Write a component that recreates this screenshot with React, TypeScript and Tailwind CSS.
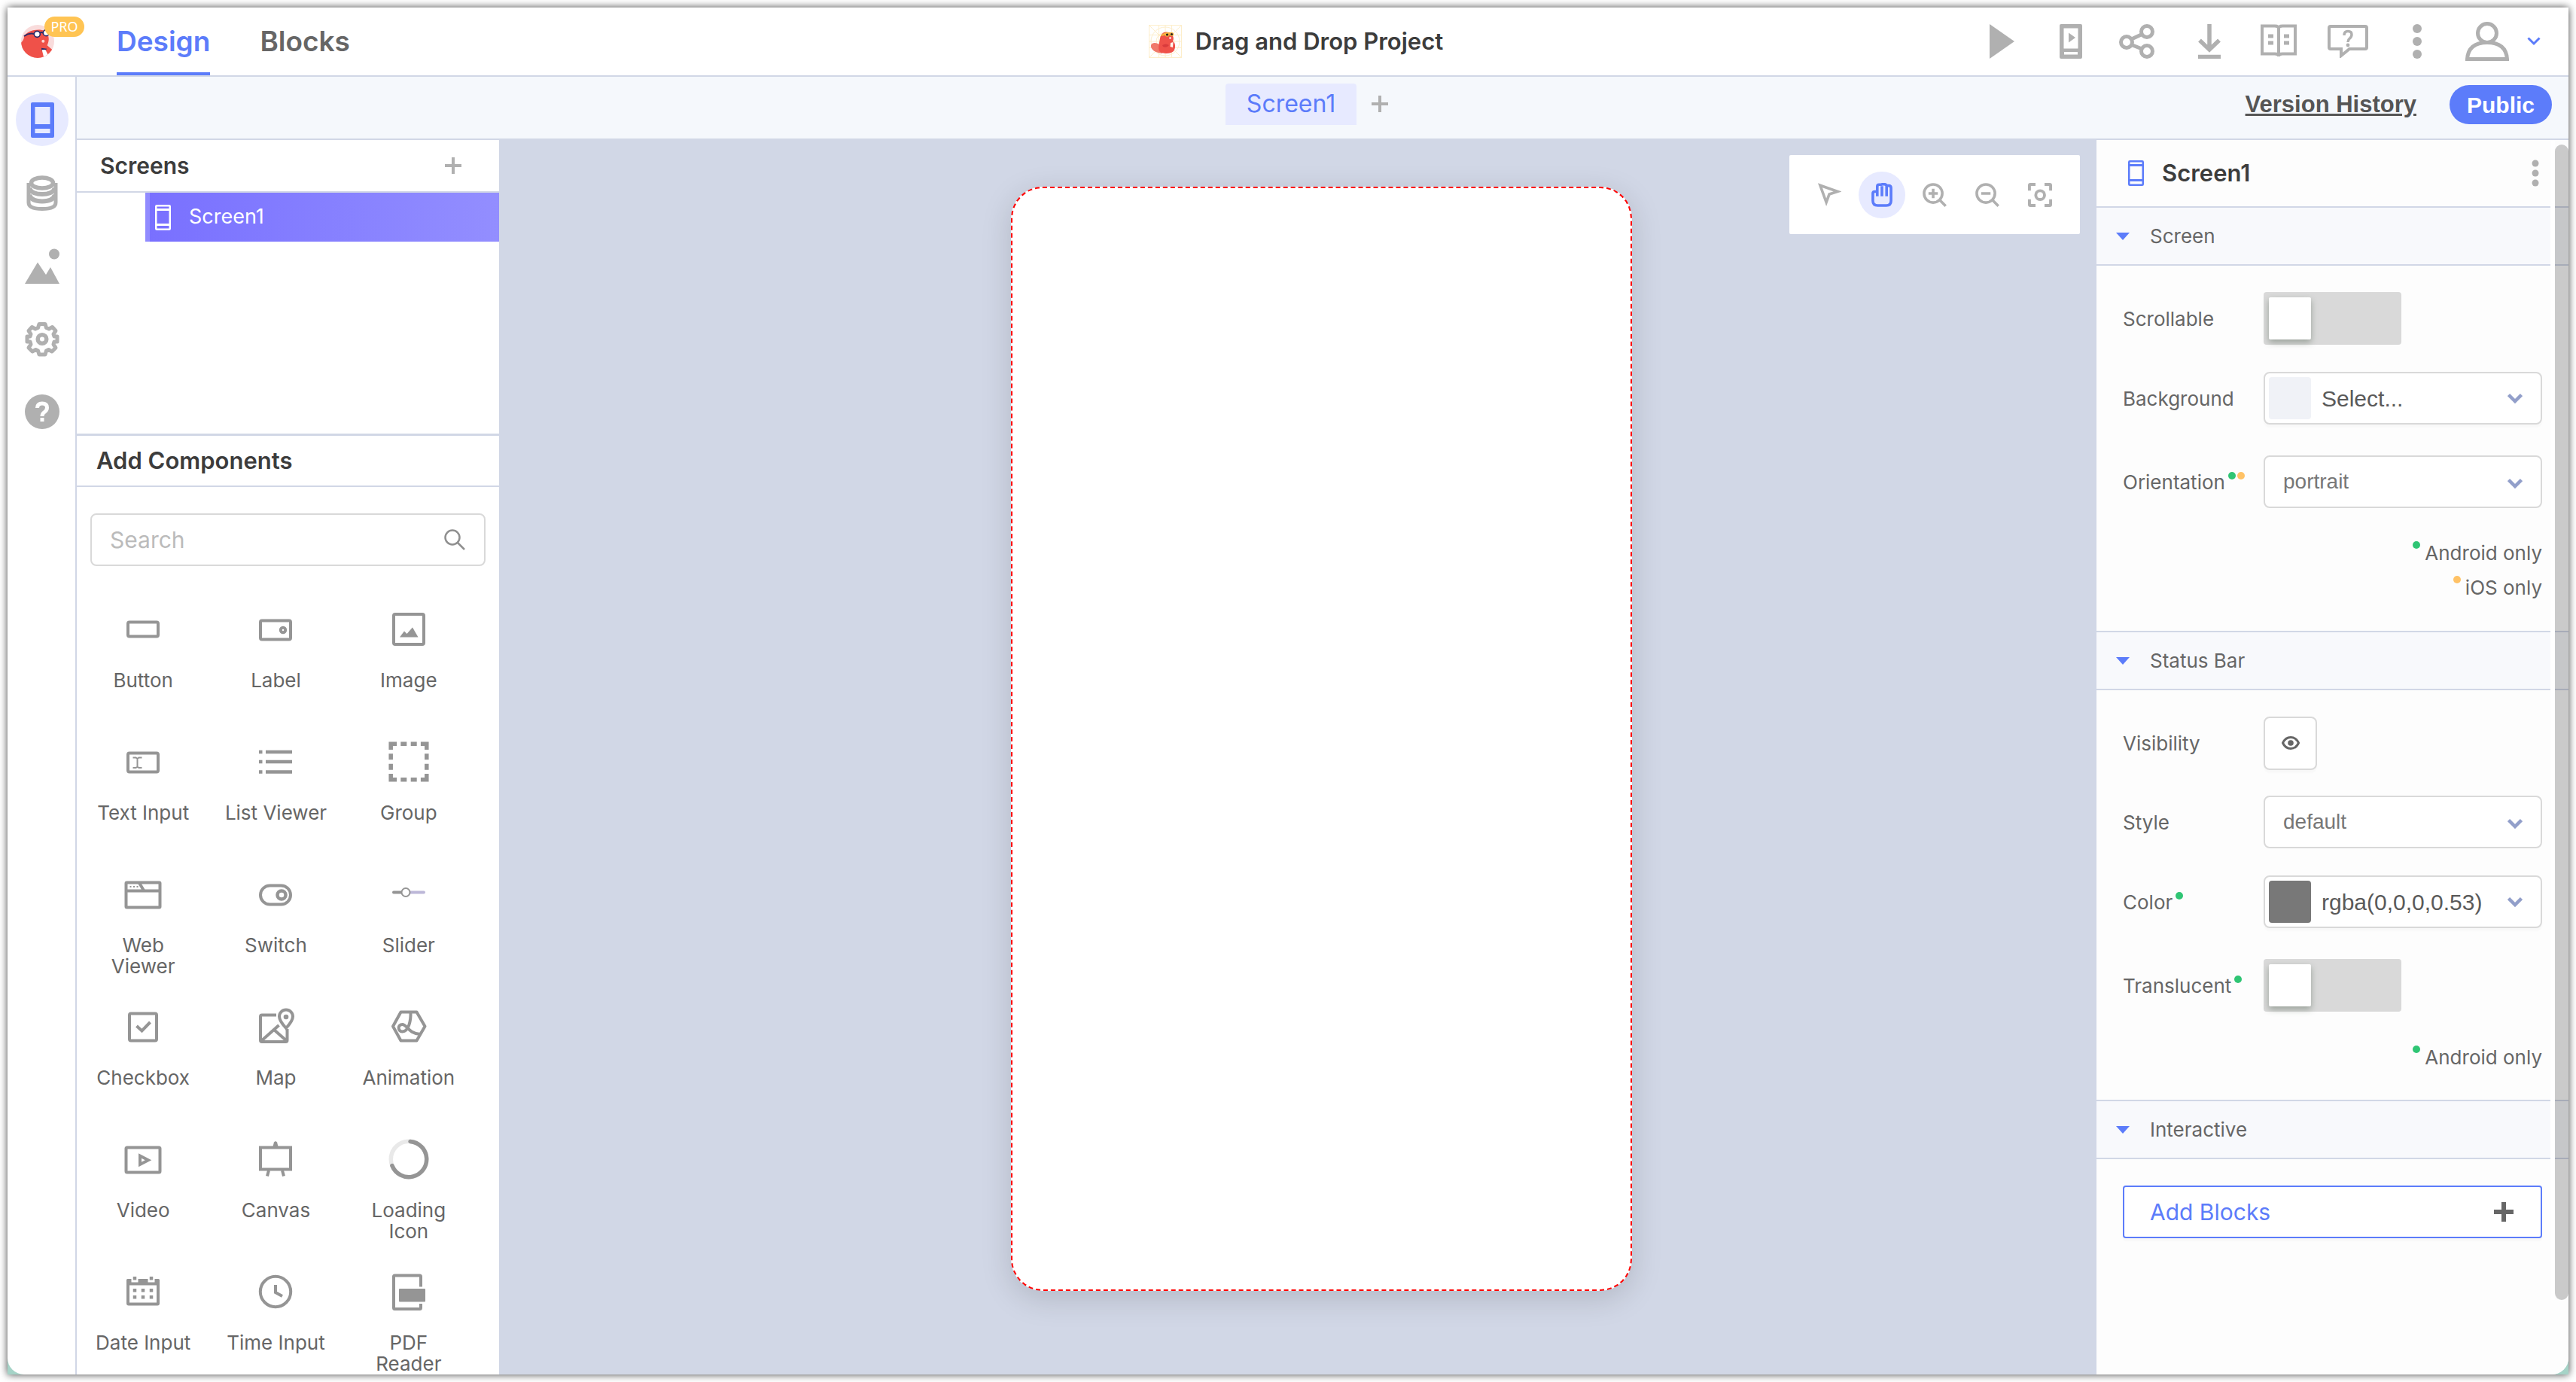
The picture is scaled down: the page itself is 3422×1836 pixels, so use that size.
import React from "react";

type IconProps = { className?: string };

/* ---------- Brand drawings ---------- */

function AvatarLogo() {
  return (
    <svg viewBox="24 39 132 132" className="size-11" aria-hidden="true">
      <clipPath id="avatarClip">
        <circle cx="90" cy="105" r="66" />
      </clipPath>
      <circle cx="90" cy="105" r="66" fill="#f9dcdc" />
      <g clipPath="url(#avatarClip)">
        <path d="M35 84C48 66 74 56 104 59C126 62 136 82 134 100C133 110 130 116 128 121L148 138V175H24V110C30 104 38 94 35 84Z" fill="#ef5149" />
        <path d="M105 131L127 134L121 141H106Z" fill="#2b2a66" />
        <path d="M107 139L121 138L132 160L115 170Z" fill="#fff" />
        <path d="M36 84Q56 70 76 75M98 71Q106 67 112 71" fill="none" stroke="#2b2a66" strokeWidth="6" />
        <circle cx="88" cy="76" r="12" fill="#fff" stroke="#2b2a66" strokeWidth="5" />
        <circle cx="124" cy="71" r="12" fill="#fff" stroke="#2b2a66" strokeWidth="5" />
        <circle cx="112" cy="104" r="6" fill="#fbd5d2" />
      </g>
    </svg>
  );
}

function ProjectLogo() {
  return (
    <svg viewBox="0 0 44 44" className="size-11" aria-hidden="true">
      <g fill="none" stroke="#fdeecb" strokeWidth="1">
        <rect x="0.5" y="0.5" width="43" height="43" />
        <path d="M0 13.5H44M0 30.5H44M13.5 0V44M30.5 0V44M22 0V44M0 22H44M0 0L44 44M44 0L0 44" />
        <circle cx="22" cy="22" r="19" />
        <circle cx="22" cy="22" r="12" />
      </g>
      <path d="M15 27C11 23 4 23 3 27C2 33 9 37 18 38L20 30Z" fill="#f0796a" />
      <path d="M15 18C16 11 21 8 27 10C32 12 34 17 32 22C36 24 36 31 33 35C29 39 18 39 14 35C12 31 14 24 15 18Z" fill="#ef5149" />
      <path d="M18 27Q23 24 27 27Q24 31 19 29Z" fill="#d93b3c" />
      <path d="M16 14Q22 8 33 11V14Q24 13 16 15Z" fill="#f3b23d" />
      <circle cx="24.5" cy="13" r="2.8" fill="#f3b23d" />
      <circle cx="30.5" cy="12.5" r="2.6" fill="#f3b23d" />
      <circle cx="24.5" cy="13" r="1.6" fill="#222" />
      <circle cx="30.5" cy="12.5" r="1.5" fill="#222" />
      <circle cx="28.5" cy="17.5" r="1.3" fill="#fff" />
      <path d="M29 24L32.5 23L32 30L28.5 29Z" fill="#fff5ec" />
    </svg>
  );
}

/* ---------- Shared icons ---------- */

function Plus({ className }: IconProps) {
  return (
    <svg viewBox="0 0 22 22" className={className} fill="none" stroke="currentColor" strokeWidth="4" aria-hidden="true">
      <path d="M11 0V22M0 11H22" />
    </svg>
  );
}

function ScreenIcon({ className }: IconProps) {
  return (
    <svg viewBox="0 0 21 34" className={className} fill="none" stroke="currentColor" aria-hidden="true">
      <rect x="1.25" y="1.25" width="18.5" height="31.5" rx="1" strokeWidth="2.5" />
      <path d="M1 6.5H20M1 26.5H20" strokeWidth="3" />
    </svg>
  );
}

function Chevron({ className }: IconProps) {
  return (
    <svg viewBox="0 0 20 14" className={className} fill="none" stroke="currentColor" strokeWidth="4.5" aria-hidden="true">
      <path d="M1.500 2.500L10 11L18.500 2.500" />
    </svg>
  );
}

/* ---------- Header icons ---------- */

const headerIcons: { label: string; icon: React.ReactNode }[] = [
  {
    label: "Play",
    icon: <svg viewBox="0 0 33 46" className="h-[46px] w-[33px]" fill="currentColor"><path d="M0 0L33 23L0 46Z" /></svg>,
  },
  {
    label: "Live test",
    icon: (
      <svg viewBox="0 0 30 46" className="h-[46px] w-[30px]" fill="currentColor">
        <path fillRule="evenodd" d="M2 0H28Q30 0 30 2V44Q30 46 28 46H2Q0 46 0 44V2Q0 0 2 0ZM5.500 5.500V32.500H24.500V5.500ZM6 37V40.500H24V37Z" />
        <path d="M12 11.500L21 18L12 24.500Z" />
      </svg>
    ),
  },
  {
    label: "Share",
    icon: (
      <svg viewBox="4 0 56 46" className="h-[46px] w-14" fill="none" stroke="currentColor" strokeWidth="5">
        <circle cx="14" cy="24" r="7.500" />
        <circle cx="41" cy="10" r="7.500" />
        <circle cx="41" cy="36" r="7.500" />
        <path d="M20.500 20L34.500 13.500M20.500 27.500L34.500 33" />
      </svg>
    ),
  },
  {
    label: "Download",
    icon: (
      <svg viewBox="0 0 30 46" className="h-[46px] w-[30px]" fill="none" stroke="currentColor" strokeWidth="6">
        <path d="M15 0V32M2 21.500L15 34L28 21.500M0 43.500H30" strokeWidth="5.500" />
      </svg>
    ),
  },
  {
    label: "Documentation",
    icon: (
      <svg viewBox="0 0 48 46" className="h-[46px] w-[48px]" fill="none" stroke="currentColor" strokeWidth="4">
        <path d="M2 2.500H19Q24 2.500 24 6Q24 2.500 29 2.500H46V39.500H29Q24 39.500 24 43Q24 39.500 19 39.500H2ZM24 5V43" />
        <path d="M10 16H17M10 25H17M31 16H38M31 25H38" strokeWidth="5" />
      </svg>
    ),
  },
  {
    label: "Community help",
    icon: (
      <svg viewBox="0 0 54 44" className="h-11 w-[54px]" fill="none" stroke="currentColor" strokeWidth="4">
        <path d="M4 2H50Q52 2 52 4V30Q52 32 50 32H29L18 41V32H4Q2 32 2 30V4Q2 2 4 2Z" />
        <path d="M22 14Q22 8.500 27 8.500Q32 8.500 32 13Q32 16 29 18.500Q27 20 27 23" strokeWidth="3.500" />
        <circle cx="27" cy="27" r="2.400" fill="currentColor" stroke="none" />
      </svg>
    ),
  },
  {
    label: "More",
    icon: (
      <svg viewBox="0 0 12 46" className="h-[46px] w-3" fill="currentColor">
        <circle cx="6" cy="6" r="6" /><circle cx="6" cy="23" r="6" /><circle cx="6" cy="40" r="6" />
      </svg>
    ),
  },
];

/* ---------- Left rail icons ---------- */

const railIcons: { label: string; active?: boolean; icon: React.ReactNode }[] = [
  {
    label: "Screens",
    active: true,
    icon: (
      <svg viewBox="0 0 31 47" className="h-[47px] w-[31px]" fill="currentColor">
        <path fillRule="evenodd" d="M2 0H29Q31 0 31 2V45Q31 47 29 47H2Q0 47 0 45V2Q0 0 2 0ZM5.500 6V29H25.500V6ZM5.500 35V41H25.500V35Z" />
      </svg>
    ),
  },
  {
    label: "Data",
    icon: (
      <svg viewBox="0 0 42 47" className="h-[47px] w-[42px]" fill="none" stroke="currentColor" strokeWidth="5">
        <ellipse cx="21" cy="10" rx="14.500" ry="7" strokeWidth="5.500" />
        <path d="M3 10V36Q3 44.500 21 44.500Q39 44.500 39 36V10" />
        <path d="M4 17Q7 25 21 25Q35 25 38 17M4 26Q7 34.500 21 34.500Q35 34.500 38 26" strokeWidth="6" />
      </svg>
    ),
  },
  {
    label: "Assets",
    icon: (
      <svg viewBox="0 0 46 47" className="h-[47px] w-[46px]" fill="currentColor">
        <path d="M0 47L17 18.500L28 35L34 25L46 47Z" />
        <circle cx="39" cy="7.500" r="7" />
      </svg>
    ),
  },
  {
    label: "Settings",
    icon: (
      <svg viewBox="0 0 46 47" className="h-[47px] w-[46px]" fill="none" stroke="currentColor" strokeWidth="5" strokeLinejoin="round">
        <path d="M19 3.500H27L28.500 8.500L32 10L36.500 7.500L41 12.500L38 17L39 20H43V27H39L38 30.500L41 35L36 40L31.500 37.500L28.500 39L27 44H19L17.500 39L14.500 37.500L10 40L5 35L8 30.500L7 27H3V20H7L8 17L5 12.500L9.500 7.500L14 10L17.500 8.500Z" />
        <circle cx="23" cy="23.500" r="5.800" strokeWidth="5.500" />
      </svg>
    ),
  },
  {
    label: "Help",
    icon: (
      <svg viewBox="0 0 46 46" className="size-[46px]" aria-hidden="true">
        <circle cx="23" cy="23" r="23" fill="currentColor" />
        <path d="M16.500 18Q16.500 12 23 12Q29.500 12 29.500 17.500Q29.500 21 26 23.500Q23 25.500 23 29" fill="none" stroke="#fff" strokeWidth="5" />
        <rect x="20.500" y="31" width="5" height="5" fill="#fff" />
      </svg>
    ),
  },
];

/* ---------- Component palette ---------- */

const palette: { label: string; icon: React.ReactNode }[] = [
  { label: "Button", icon: <rect x="8" y="18.500" width="40" height="19" rx="2" /> },
  {
    label: "Label",
    icon: <><rect x="8" y="16.500" width="40" height="25" rx="2" /><circle cx="38" cy="29" r="3.200" /></>,
  },
  {
    label: "Image",
    icon: (
      <>
        <rect x="8" y="8" width="40" height="40" rx="2" />
        <path d="M16 38.500L22 30.500L25.500 34L33 25.500L40.500 38.500Z" fill="currentColor" stroke="none" />
      </>
    ),
  },
  {
    label: "Text Input",
    icon: (
      <>
        <rect x="8" y="16.500" width="40" height="25" rx="2" />
        <path d="M14.500 22.500H18.500L20.500 24L22.500 22.500H26.500M14.500 36H18.500L20.500 34.500L22.500 36H26.500M20.500 23V35" strokeWidth="2" />
      </>
    ),
  },
  {
    label: "List Viewer",
    icon: <path d="M6 15H10.500M6 28H10.500M6 41.500H10.500M15 15H50M15 28H50M15 41.500H50" strokeWidth="4.500" />,
  },
  {
    label: "Group",
    icon: (
      <path
        d="M1.500 4.300H54.500M1.500 51.700H54.500M4.200 1.500V54.500M51.800 1.500V54.500"
        strokeWidth="5.500"
        strokeDasharray="10.6 5.200 8 5.400 8 5.200 10.600 0"
      />
    ),
  },
  {
    label: "Web\nViewer",
    icon: (
      <>
        <rect x="5.500" y="12.500" width="45" height="33" rx="1" />
        <path d="M5 23.500H50M23 13L29 23" />
        <path d="M10.500 18H12.500M15 18H17M19.500 18H21.500" strokeWidth="2" />
      </>
    ),
  },
  {
    label: "Switch",
    icon: <><rect x="8" y="16.500" width="40" height="25" rx="12.500" /><circle cx="36" cy="29" r="5.500" strokeWidth="4.500" /></>,
  },
  {
    label: "Slider",
    icon: (
      <>
        <path d="M8 25.500H20" strokeLinecap="round" />
        <path d="M30 25.500H48" stroke="#bdb8d8" strokeLinecap="round" />
        <circle cx="24" cy="25.500" r="5.500" fill="#fff" strokeWidth="2" />
      </>
    ),
  },
  {
    label: "Checkbox",
    icon: <><rect x="10" y="10.500" width="36" height="36" rx="2" /><path d="M19.500 27L26.500 33.500L37.500 22" /></>,
  },
  {
    label: "Map",
    icon: (
      <>
        <path d="M29 12.500H10Q8 12.500 8 14.500V46Q8 48 10 48H41.500Q43.500 48 43.500 46V31M9 47L32.500 26M26 32L43 47" />
        <path d="M42 30Q33 20 33 14.500A9 9 0 0 1 51 14.500Q51 20 42 30Z" strokeWidth="4" />
        <circle cx="42" cy="15" r="3.300" fill="currentColor" stroke="none" />
      </>
    ),
  },
  {
    label: "Animation",
    icon: (
      <>
        <path d="M7 27.500L17.500 8.500H38.500L49.500 27.500L38.500 46.500H17.500Z" strokeLinejoin="round" />
        <path d="M30.500 8C31 20 28 34 19.500 34.500C13 34 13 25 19.500 25C26 25 27 37 43.500 38" />
      </>
    ),
  },
  {
    label: "Video",
    icon: <><rect x="5.500" y="12.500" width="45" height="33" rx="1.500" /><path d="M24 23.500V35L35 29.200Z" /></>,
  },
  {
    label: "Canvas",
    icon: (
      <>
        <rect x="8" y="12.500" width="40" height="29" />
        <path d="M24.500 11L26 5.500Q28 3 30 5.500L31.500 11Z" fill="currentColor" stroke="none" />
        <path d="M19 43L17 50.500M37 43L39 50.500" />
      </>
    ),
  },
  {
    label: "Loading\nIcon",
    icon: (
      <>
        <circle cx="28" cy="28" r="23.700" stroke="#e9e9e9" strokeWidth="5.500" />
        <path d="M30 4.400A23.700 23.700 0 1 1 5.900 36.600" strokeWidth="5.500" strokeLinecap="round" />
      </>
    ),
  },
  {
    label: "Date Input",
    icon: (
      <>
        <path d="M8 14V43.500Q8 44.500 9 44.500H47Q48 44.500 48 43.500V14" />
        <path d="M6 12.500Q6 11 7.500 11H12.500V15.500H21.500V11H34.500V15.500H43.500V11H48.500Q50 11 50 12.500V19.500H6Z" fill="currentColor" stroke="none" />
        <path d="M17 8V12.500M39 8V12.500M17 24V28.500M28 24V28.500M39 24V28.500M17 33V37.500M28 33V37.500M39 33V37.500" strokeWidth="4.500" />
      </>
    ),
  },
  {
    label: "Time Input",
    icon: <><circle cx="28" cy="28" r="20.200" /><path d="M28 19V29L37 34" /></>,
  },
  {
    label: "PDF\nReader",
    icon: (
      <>
        <path d="M44 21.500V8Q44 6.500 42.500 6.500H9.500Q8 6.500 8 8V49.500Q8 51 9.500 51H42.500Q44 51 44 49.500V44" />
        <rect x="15" y="24" width="35" height="17.500" rx="1" fill="currentColor" stroke="none" />
      </>
    ),
  },
];

/* ---------- Canvas toolbar ---------- */

const tools: { label: string; active?: boolean; icon: React.ReactNode }[] = [
  {
    label: "Select",
    icon: <svg viewBox="131 130 98 100" className="h-[34px] w-8" fill="none" stroke="currentColor" strokeWidth="11"><path d="M143 141L214 166L180 177L168 210Z" /></svg>,
  },
  {
    label: "Pan",
    active: true,
    icon: (
      <svg viewBox="342 127 90 98" className="h-8 w-[30px]" fill="none" stroke="currentColor" strokeWidth="11" strokeLinejoin="round">
        <path d="M368 181V141Q368 134 375 134H384Q387 132 395 132Q404 132 406 138H414Q424 138 424 148V200Q424 219 405 219H370Q350 219 350 200V170Q350 162 358 162H368M387 181V140M406 181V140" />
      </svg>
    ),
  },
  {
    label: "Zoom in",
    icon: (
      <svg viewBox="549 126 98 98" className="size-8" fill="none" stroke="currentColor" strokeWidth="11">
        <circle cx="592" cy="169" r="37" /><path d="M618 195L643 220M592 150V188M573 169H611" />
      </svg>
    ),
  },
  {
    label: "Zoom out",
    icon: (
      <svg viewBox="549 126 98 98" className="size-8" fill="none" stroke="currentColor" strokeWidth="11">
        <circle cx="592" cy="169" r="37" /><path d="M618 195L643 220M573 169H611" />
      </svg>
    ),
  },
  {
    label: "Fit to view",
    icon: (
      <svg viewBox="972 126 99 99" className="size-8" fill="none" stroke="currentColor" strokeWidth="12">
        <path d="M978 158V136Q978 132 982 132H1003M1040 132H1061Q1065 132 1065 136V158M1065 193V215Q1065 219 1061 219H1040M1003 219H982Q978 219 978 215V193" />
        <circle cx="1022" cy="176" r="18" />
      </svg>
    ),
  },
];

/* ---------- Property panel parts ---------- */

function Dot({ color }: { color: "green" | "amber" }) {
  return <span className={`inline-block size-[10px] rounded-full ${color === "green" ? "bg-[#2fc574]" : "bg-[#ffc266]"}`} />;
}

function Section({ title, children }: { title: string; children: React.ReactNode }) {
  return (
    <section>
      <button className="flex h-[79px] w-full items-center gap-[27px] border-y-2 border-[#d1d7e6] bg-[#f8f9fc] pl-[26px] text-[26px] text-[#666]">
        <svg viewBox="0 0 18 10" className="h-[10px] w-[18px]" fill="#5c7cfa" aria-hidden="true"><path d="M0 0H18L9 10Z" /></svg>
        {title}
      </button>
      {children}
    </section>
  );
}

function Row({ label, htmlFor, dots, children }: { label: string; htmlFor: string; dots?: ("green" | "amber")[]; children: React.ReactNode }) {
  return (
    <div className="flex h-[70px] items-center">
      <label htmlFor={htmlFor} className="flex w-[187px] shrink-0 items-center pt-[2px] text-[26px] leading-8 text-[#666]">
        {label}
        {dots && (
          <span className="flex gap-[2px] self-start pt-[2px] pl-1">
            {dots.map((d) => <Dot key={d} color={d} />)}
          </span>
        )}
      </label>
      {children}
    </div>
  );
}

function Toggle({ id }: { id: string }) {
  return (
    <input
      id={id}
      type="checkbox"
      className="h-[70px] w-[183px] appearance-none rounded-[4px] bg-[#d9d9d9] p-[7px] before:block before:size-14 before:rounded-[2px] before:bg-white before:shadow-[0_4px_8px_rgba(60,80,60,0.4)] checked:before:ml-auto"
    />
  );
}

function SelectBox({ id, value }: { id: string; value: string }) {
  return (
    <div className="relative flex-1">
      <select
        id={id}
        defaultValue={value}
        className="h-[70px] w-full appearance-none rounded-lg border-2 border-[#d9d9d9] bg-white pl-6 font-['Liberation_Sans',sans-serif] text-[28px] text-[#777]"
      >
        <option>{value}</option>
      </select>
      <Chevron className="pointer-events-none absolute top-[30px] right-[26px] h-[14px] w-5 text-[#929fca]" />
    </div>
  );
}

function ColorBox({ id, value, swatch }: { id: string; value: string; swatch: string }) {
  return (
    <button
      id={id}
      className="flex h-[70px] flex-1 items-center rounded-lg border-2 border-[#d9d9d9] bg-white pr-6 pl-[5px] font-['Liberation_Sans',sans-serif] text-[30px] text-[#5a5a5a] shadow-[0_4px_2px_rgba(0,0,0,0.02)]"
    >
      <span className={`mr-[14px] size-14 rounded-[4px] ${swatch}`} />
      <span className="flex-1 text-left">{value}</span>
      <Chevron className="h-[14px] w-5 text-[#929fca]" />
    </button>
  );
}

function Note({ color, children }: { color: "green" | "amber"; children: React.ReactNode }) {
  return (
    <p className="flex justify-end gap-[6px] text-[26px] leading-[46px] text-[#666]">
      <span className="flex pt-[7px]"><Dot color={color} /></span>
      {children}
    </p>
  );
}

/* ---------- Page ---------- */

export default function App() {
  return (
    <div className="h-screen bg-white p-[10px] font-['Inter',sans-serif]">
      <div className="h-full bg-[#a5d3c7] shadow-[0_0_10px_rgba(0,0,0,0.75)]">
        <div className="flex h-full flex-col overflow-hidden rounded-b-[22px] bg-white">
          <header className="flex h-[92px] shrink-0 items-stretch border-b-2 border-[#d1d7e6]">
            <div className="flex flex-1 items-stretch pl-[18px]">
              <div className="relative flex w-[127px] items-center">
                <AvatarLogo />
                <span className="absolute top-3 left-[31px] flex h-[27px] w-[53px] items-center justify-center rounded-full bg-[#ffc453] font-['Noto_Sans',sans-serif] text-[18px] text-white">PRO</span>
              </div>
              <nav className="flex items-stretch gap-[66px] text-[37px] font-semibold">
                <a href="#design" className="flex items-center border-b-4 border-[#5c7cfa] pt-1 text-[#5c7cfa]">Design</a>
                <a href="#blocks" className="flex items-center border-b-4 border-transparent pt-1 text-[#666]">Blocks</a>
              </nav>
            </div>
            <div className="flex items-center gap-[18px] pl-10">
              <ProjectLogo />
              <h1 className="text-[31px] font-semibold text-[#3c3c3c]">Drag and Drop Project</h1>
            </div>
            <div className="flex flex-1 items-center justify-end gap-9 pr-[37px] text-[#b0b0b0]">
              {headerIcons.map((item) => (
                <button key={item.label} aria-label={item.label} className="flex w-14 items-center justify-center">{item.icon}</button>
              ))}
              <button aria-label="Account" className="flex items-center gap-6">
                <svg viewBox="0 0 58 52" className="h-[52px] w-[58px]" fill="none" stroke="currentColor" strokeWidth="5">
                  <circle cx="29" cy="15" r="12.500" />
                  <path d="M2.500 49.500Q4 27.500 29 27.500Q54 27.500 55.500 49.500Z" />
                </svg>
                <svg viewBox="0 0 18 12" className="h-3 w-[18px]" fill="none" stroke="#5c7cfa" strokeWidth="3"><path d="M1.500 1.500L9 9L16.500 1.500" /></svg>
              </button>
            </div>
          </header>

          <div className="flex min-h-0 flex-1">
            <nav className="flex w-[92px] shrink-0 flex-col items-center gap-[27px] border-r-2 border-[#d1d7e6] pt-[22px] pl-[2px]">
              {railIcons.map((item) => (
                <button
                  key={item.label}
                  aria-label={item.label}
                  className={`flex size-[70px] items-center justify-center rounded-full ${item.active ? "bg-[#e7eaff] text-[#5c7cfa]" : "text-[#b0b0b0]"}`}
                >
                  {item.icon}
                </button>
              ))}
            </nav>

            <div className="flex min-w-0 flex-1 flex-col">
              <div className="flex h-[84px] shrink-0 items-center border-b-2 border-[#d1d7e6] bg-[#f5f8fc]">
                <div className="flex-1" />
                <div className="flex items-center gap-5 pr-5 pb-[10px]">
                  <button className="h-[55px] rounded-t-[4px] bg-[#e7eaff] px-7 text-[32px] text-[#5c7cfa]">Screen1</button>
                  <button aria-label="Add screen tab" className="text-[#b0b0b0]"><Plus className="size-[22px]" /></button>
                </div>
                <div className="flex flex-1 items-center justify-end gap-[44px] pr-[22px] pb-2 font-['Liberation_Sans',sans-serif] text-[30px] font-bold">
                  <a href="#history" className="text-[31px] text-[#555] underline">Version History</a>
                  <button className="h-[52px] rounded-full bg-[#5c7cfa] px-[23px] text-white">Public</button>
                </div>
              </div>

              <div className="flex min-h-0 flex-1">
                <aside className="flex w-[561px] shrink-0 flex-col overflow-hidden bg-white">
                  <div className="flex h-[70px] shrink-0 items-center justify-between border-b-2 border-[#d1d7e6] pr-[50px] pl-[31px]">
                    <h2 className="text-[30px] font-semibold text-[#3c3c3c]">Screens</h2>
                    <button aria-label="Add screen" className="text-[#b0b0b0]"><Plus className="size-[22px]" /></button>
                  </div>
                  <div className="h-[320px] shrink-0 pl-[91px]">
                    <button className="flex h-[65px] w-full items-center gap-6 border-l-[6px] border-[#918bff] bg-linear-to-r from-[#7970ff] to-[#938eff] pl-[7px] text-[27px] text-white">
                      <ScreenIcon className="h-[34px] w-[21px]" />
                      Screen1
                    </button>
                  </div>
                  <h2 className="flex h-[71px] shrink-0 items-center border-t-[3px] border-b-2 border-[#d1d7e6] pl-[26px] text-[31px] font-semibold text-[#3c3c3c]">Add Components</h2>
                  <div className="relative mx-[18px] mt-[35px] mb-14">
                    <input
                      aria-label="Search components"
                      placeholder="Search"
                      className="h-[70px] w-full rounded-lg border-2 border-[#d9d9d9] pl-6 text-[30px] placeholder:text-[#bbb]"
                    />
                    <svg viewBox="0 0 28 28" className="absolute top-[21px] right-[27px] size-7" fill="none" stroke="#8f8f8f" strokeWidth="2.500" aria-hidden="true">
                      <circle cx="11" cy="11" r="9.500" /><path d="M18 18L27 27" />
                    </svg>
                  </div>
                  <div className="grid auto-rows-[176px] grid-cols-3 pr-8">
                    {palette.map((item) => (
                      <button key={item.label} className="flex flex-col items-center gap-[26px] text-[26px] leading-7 whitespace-pre-line text-[#666]">
                        <svg viewBox="0 0 56 56" className="size-14 text-[#959595]" fill="none" stroke="currentColor" strokeWidth="4" aria-hidden="true">{item.icon}</svg>
                        {item.label}
                      </button>
                    ))}
                  </div>
                </aside>

                <main className="relative flex min-w-0 flex-1 items-start justify-center overflow-hidden bg-[#d1d7e6] pt-[62px] pl-[63px]">
                  <div className="h-[1467px] w-[825px] rounded-[42px] border-2 border-dashed border-[#f00] bg-white shadow-[0_10px_40px_rgba(0,0,0,0.15)]" />
                  <div className="absolute top-5 right-[22px] flex h-[105px] items-center gap-2 rounded-[2px] bg-white px-[22px] text-[#b0b0b0]">
                    {tools.map((tool) => (
                      <button
                        key={tool.label}
                        aria-label={tool.label}
                        className={`flex size-[62px] items-center justify-center rounded-full ${tool.active ? "bg-[#e7eaff] text-[#5c7cfa]" : ""}`}
                      >
                        {tool.icon}
                      </button>
                    ))}
                  </div>
                </main>

                <aside className="relative w-[627px] shrink-0 bg-[#fdfdfd]">
                  <div className="flex h-[88px] items-center pr-[39px] pl-[42px]">
                    <ScreenIcon className="h-[34px] w-[21px] text-[#5c7cfa]" />
                    <h2 className="flex-1 pl-6 text-[31px] font-semibold text-[#3c3c3c]">Screen1</h2>
                    <button aria-label="Screen options" className="text-[#b0b0b0]">
                      <svg viewBox="0 0 10 36" className="h-9 w-[10px]" fill="currentColor">
                        <circle cx="5" cy="5" r="4.500" /><circle cx="5" cy="18" r="4.500" /><circle cx="5" cy="31" r="4.500" />
                      </svg>
                    </button>
                  </div>
                  <Section title="Screen">
                    <div className="flex h-[485px] flex-col pt-[35px] pr-[35px] pl-[35px]">
                      <Row label="Scrollable" htmlFor="scrollable"><Toggle id="scrollable" /></Row>
                      <div className="mt-9 mb-[41px]">
                        <Row label="Background" htmlFor="background"><ColorBox id="background" value="Select..." swatch="bg-[#f0f2f7]" /></Row>
                      </div>
                      <Row label="Orientation" htmlFor="orientation" dots={["green", "amber"]}><SelectBox id="orientation" value="portrait" /></Row>
                      <div className="pt-[37px]">
                        <Note color="green">Android only</Note>
                        <Note color="amber">iOS only</Note>
                      </div>
                    </div>
                  </Section>
                  <Section title="Status Bar">
                    <div className="flex h-[544px] flex-col pt-[35px] pr-[35px] pl-[35px]">
                      <Row label="Visibility" htmlFor="visibility">
                        <button id="visibility" className="flex size-[71px] items-center justify-center rounded-lg border-2 border-[#d9d9d9] bg-white text-[#666] shadow-[0_4px_2px_rgba(0,0,0,0.02)]">
                          <svg viewBox="0 0 24 18" className="h-[18px] w-6" fill="none" stroke="currentColor" strokeWidth="3" aria-hidden="true">
                            <path d="M1.500 9Q5 1.500 12 1.500Q19 1.500 22.500 9Q19 16.500 12 16.500Q5 16.500 1.500 9Z" />
                            <circle cx="12" cy="9" r="3.800" fill="currentColor" stroke="none" />
                          </svg>
                        </button>
                      </Row>
                      <div className="mt-[35px] mb-9">
                        <Row label="Style" htmlFor="style"><SelectBox id="style" value="default" /></Row>
                      </div>
                      <Row label="Color" htmlFor="color" dots={["green"]}><ColorBox id="color" value="rgba(0,0,0,0.53)" swatch="bg-[#787878]" /></Row>
                      <div className="pt-[41px]">
                        <Row label="Translucent" htmlFor="translucent" dots={["green"]}><Toggle id="translucent" /></Row>
                      </div>
                      <div className="pt-[38px]"><Note color="green">Android only</Note></div>
                    </div>
                  </Section>
                  <Section title="Interactive">
                    <div className="px-[35px] pt-[35px]">
                      <button className="flex h-[70px] w-full items-center justify-between rounded-[4px] border-2 border-[#5c7cfa] bg-white pr-[36px] pl-[34px] text-[30px] text-[#5c7cfa] shadow-[0_4px_2px_rgba(0,0,0,0.02)]">
                        Add Blocks
                        <svg viewBox="0 0 26 26" className="size-[26px] text-[#666]" fill="none" stroke="currentColor" strokeWidth="6" aria-hidden="true"><path d="M13 0V26M0 13H26" /></svg>
                      </button>
                    </div>
                  </Section>
                  <div className="absolute top-0 right-0 bottom-[99px] w-6 border-l-[6px] border-white pt-[6px]">
                    <div className="h-full rounded-full bg-black/20" />
                  </div>
                </aside>
              </div>
            </div>
          </div>
        </div>
      </div>
    </div>
  );
}
